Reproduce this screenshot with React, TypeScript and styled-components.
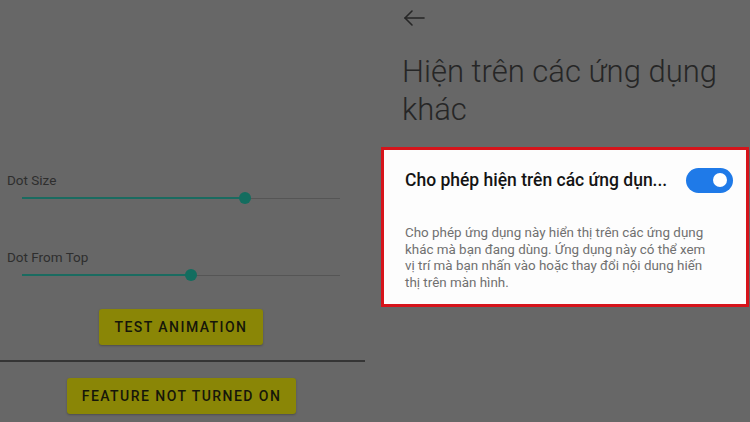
import React from "react";
import styled, { createGlobalStyle } from "styled-components";

const Global = createGlobalStyle`
  html, body { margin: 0; padding: 0; background: #676767; }
  body { font-family: Roboto, "Noto Sans", sans-serif; }
  * { box-sizing: border-box; }
`;

const Screen = styled.div`
  width: 750px;
  height: 422px;
  display: flex;
  background: #676767;
  overflow: hidden;
`;

const LeftPane = styled.div`
  width: 381px;
  display: flex;
  flex-direction: column;
  padding-top: 172px;
`;

const SliderBlock = styled.div<{ $gap?: number }>`
  display: flex;
  flex-direction: column;
  margin-bottom: ${(p) => p.$gap ?? 0}px;
`;

const SliderLabel = styled.div`
  font-size: 13.5px;
  line-height: 16px;
  color: #2e2e2e;
  padding-left: 7px;
  height: 16px;
`;

const Track = styled.div`
  position: relative;
  margin: 4px 25px 0 22px;
  height: 12px;
  display: flex;
  align-items: center;
  width: 318px;
`;

const TrackFill = styled.div`
  height: 2px;
  background: #1a6b60;
`;

const TrackRest = styled.div`
  flex: 1;
  height: 1px;
  background: #555555;
`;

const Thumb = styled.div`
  width: 12px;
  height: 12px;
  border-radius: 50%;
  background: #136d5f;
  margin: 0 -6px;
  position: relative;
  z-index: 1;
`;

const ButtonRow = styled.div<{ $offset: number }>`
  display: flex;
  padding-left: ${(p) => p.$offset}px;
`;

const YellowButton = styled.div<{ $w: number }>`
  width: ${(p) => p.$w}px;
  height: 36px;
  border-radius: 3px;
  background: #8a8606;
  box-shadow: 0 1px 2px rgba(0, 0, 0, 0.25);
  display: flex;
  align-items: center;
  justify-content: center;
  font-size: 14px;
  font-weight: 500;
  letter-spacing: 1.45px;
  color: #16160a;
`;

const Divider = styled.div`
  width: 365px;
  height: 2px;
  background: #353535;
  margin: 15px 0 16px;
`;

const RightPane = styled.div`
  flex: 1;
  display: flex;
  flex-direction: column;
`;

const BackRow = styled.div`
  height: 36px;
  padding: 9px 0 0 22px;
  color: #262626;
`;

const Heading = styled.h1`
  margin: 17px 0 0 21px;
  font-size: 31px;
  line-height: 38px;
  font-weight: 300;
  color: #262626;
`;

const Highlight = styled.div`
  margin-top: 18px;
  width: 368px;
  height: 160px;
  border: 3px solid #d6141b;
  background: #fdfdfd;
  padding: 16px 13px 0 21px;
`;

const OptionRow = styled.div`
  display: flex;
  align-items: center;
  justify-content: space-between;
  height: 28px;
`;

const OptionTitle = styled.div`
  font-size: 17.5px;
  font-weight: 500;
  color: #141414;
  white-space: nowrap;
`;

const Switch = styled.div`
  width: 47px;
  height: 25px;
  border-radius: 13px;
  background: #1f7ae8;
  display: flex;
  align-items: center;
  justify-content: flex-end;
  padding-right: 6px;
`;

const Knob = styled.div`
  width: 14px;
  height: 14px;
  border-radius: 50%;
  background: #ffffff;
`;

const Description = styled.p`
  margin: 31px 0 0;
  width: 306px;
  font-size: 13.4px;
  line-height: 16.6px;
  color: #707070;
`;

function Slider({ value }: { value: number }) {
  return (
    <Track>
      <TrackFill style={{ width: `${value}px` }} />
      <Thumb />
      <TrackRest />
    </Track>
  );
}

export default function App() {
  return (
    <>
      <Global />
      <Screen>
        <LeftPane>
          <SliderBlock $gap={45}>
            <SliderLabel>Dot Size</SliderLabel>
            <Slider value={223} />
          </SliderBlock>
          <SliderBlock $gap={28}>
            <SliderLabel>Dot From Top</SliderLabel>
            <Slider value={169} />
          </SliderBlock>
          <ButtonRow $offset={99}>
            <YellowButton $w={164}>TEST ANIMATION</YellowButton>
          </ButtonRow>
          <Divider />
          <ButtonRow $offset={67}>
            <YellowButton $w={229}>FEATURE NOT TURNED ON</YellowButton>
          </ButtonRow>
        </LeftPane>
        <RightPane>
          <BackRow>
            <svg width="22" height="18" viewBox="0 0 22 18" fill="none" stroke="#262626" strokeWidth="1.6" strokeLinecap="round" strokeLinejoin="round">
              <path d="M21 9H2" />
              <path d="M9 2L2 9l7 7" />
            </svg>
          </BackRow>
          <Heading>
            Hiện trên các ứng dụng
            <br />
            khác
          </Heading>
          <Highlight>
            <OptionRow>
              <OptionTitle>Cho phép hiện trên các ứng dụn...</OptionTitle>
              <Switch>
                <Knob />
              </Switch>
            </OptionRow>
            <Description>
              Cho phép ứng dụng này hiển thị trên các ứng dụng khác mà bạn đang dùng. Ứng dụng này có thể xem vị trí mà bạn nhấn vào hoặc thay đổi nội dung hiến thị trên màn hình.
            </Description>
          </Highlight>
        </RightPane>
      </Screen>
    </>
  );
}
